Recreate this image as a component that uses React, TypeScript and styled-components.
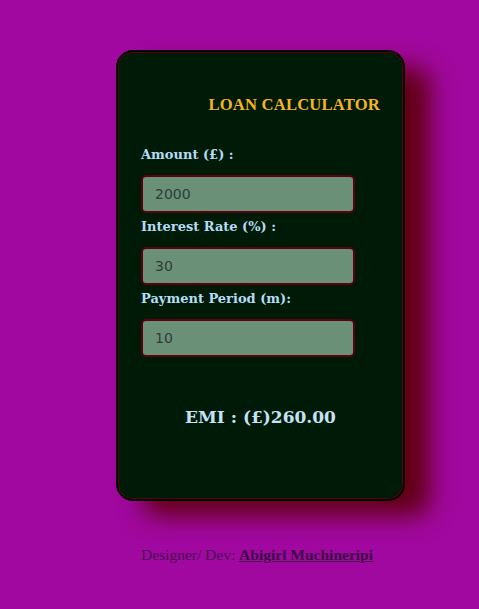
import React from "react";
import styled, { createGlobalStyle } from "styled-components";

const Global = createGlobalStyle`
  html, body { margin: 0; padding: 0; background: #a1089f; }
  body { font-family: "Liberation Serif", serif; }
`;

const Page = styled.main`
  min-height: 609px;
  display: flex;
  flex-direction: column;
  align-items: center;
  padding: 51px 0 0 42px;
  box-sizing: border-box;
`;

const Card = styled.section`
  width: 287px;
  height: 449px;
  box-sizing: border-box;
  background: #001a08;
  border: 2px solid #5a0010;
  outline: 2px solid #000;
  outline-offset: -1px;
  border-radius: 16px;
  box-shadow: 26px 16px 24px #620014;
  padding: 42px 22px 0 22px;
  display: flex;
  flex-direction: column;
`;

const Title = styled.h1`
  margin: 0 0 32px 0;
  text-align: right;
  font-family: "Liberation Serif", serif;
  font-weight: bold;
  font-size: 16.6px;
  color: #f5b51e;
  letter-spacing: 0.2px;
`;

const Field = styled.div`
  display: flex;
  flex-direction: column;
`;

const Label = styled.label`
  font-family: "DejaVu Serif", serif;
  font-weight: bold;
  font-size: 13px;
  color: #b5dcf5;
  margin-bottom: 12px;
  height: 16px;
  line-height: 16px;
`;

const Input = styled.input`
  width: 214px;
  height: 38px;
  box-sizing: border-box;
  background: #6a9078;
  border: 2px solid #5c0010;
  border-radius: 5px;
  padding: 0 0 0 12px;
  font-family: "DejaVu Sans", sans-serif;
  font-size: 14px;
  color: #2e3d33;
  margin-bottom: 6px;
  outline: none;
`;

const Result = styled.h2`
  margin: 44px 0 0 0;
  text-align: center;
  font-family: "DejaVu Serif", serif;
  font-weight: bold;
  font-size: 17px;
  color: #c6e2f5;
`;

const Footer = styled.p`
  margin: 46px 7px 0 0;
  font-family: "Liberation Serif", serif;
  font-size: 15.5px;
  color: #4a1052;
`;

const Author = styled.a`
  font-weight: bold;
  color: #3e0a48;
  text-decoration: underline;
`;

const fields = [
  { label: "Amount (£) :", value: "2000" },
  { label: "Interest Rate (%) :", value: "30" },
  { label: "Payment Period (m):", value: "10" },
];

export default function App() {
  return (
    <>
      <Global />
      <Page>
        <Card>
          <Title>LOAN CALCULATOR</Title>
          {fields.map((f) => (
            <Field key={f.label}>
              <Label>{f.label}</Label>
              <Input defaultValue={f.value} />
            </Field>
          ))}
          <Result>EMI : (£)260.00</Result>
        </Card>
        <Footer>
          Designer/ Dev: <Author>Abigirl Muchineripi</Author>
        </Footer>
      </Page>
    </>
  );
}
